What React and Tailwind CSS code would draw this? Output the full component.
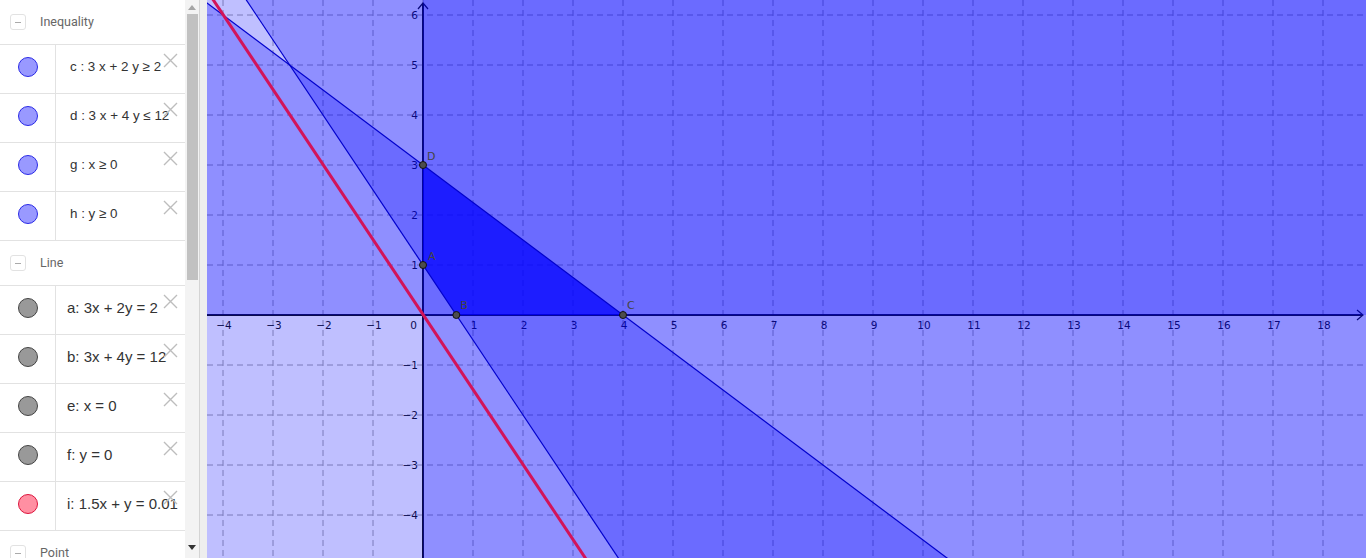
import React from "react";

const OX = 423;
const OY = 315;
const U = 50;
const sx = (x) => OX + x * U;
const sy = (y) => OY - y * U;

const xs = Array.from({ length: 23 }, (_, i) => i - 4);
const ys = Array.from({ length: 11 }, (_, i) => i - 4);
const fmt = (n) => (n < 0 ? "\u2212" + Math.abs(n) : String(n));

function XButton() {
  return (
    <svg className="absolute left-[163px] top-[8px]" width="15" height="15" viewBox="0 0 15 15">
      <path d="M1 1 L14 14 M14 1 L1 14" stroke="#bdbdbd" strokeWidth="1.4" fill="none" />
    </svg>
  );
}

function Row({ dot, big, children }) {
  return (
    <div className="relative flex h-[49px] border-t border-[#e2e2e2]">
      <div className="flex w-[56px] justify-center border-r border-[#e2e2e2] pt-[12px]">
        <div className={`h-[20px] w-[20px] rounded-full border ${dot}`} />
      </div>
      <div
        className={
          big
            ? "whitespace-nowrap pl-[11px] pt-[12px] text-[15px] leading-[20px] text-[#333]"
            : "whitespace-nowrap pl-[14px] pt-[12px] text-[13.4px] leading-[20px] text-[#333]"
        }
      >
        {children}
      </div>
      <XButton />
    </div>
  );
}

function Header({ label }) {
  return (
    <div className="flex h-[44px] items-center gap-[14px] pl-[10px]">
      <div className="flex h-[16px] w-[16px] items-center justify-center rounded-[3px] border border-[#e2e2e2]">
        <div className="h-px w-[6px] bg-[#aaa]" />
      </div>
      <span className="font-['Roboto',sans-serif] text-[12.5px] text-[#666]">{label}</span>
    </div>
  );
}

const INEQ = "bg-[#9999ff] border-[#2a2ae6]";
const LINE = "bg-[#999999] border-[#444]";
const RED = "bg-[#ff8fa2] border-[#dc143c]";

function AlgebraPanel() {
  return (
    <div className="h-full w-[185px] overflow-hidden bg-white font-['Liberation_Sans',Arial,sans-serif]">
      <Header label="Inequality" />
      <Row dot={INEQ}>c : 3 x + 2 y ≥ 2</Row>
      <Row dot={INEQ}>d : 3 x + 4 y ≤ 12</Row>
      <Row dot={INEQ}>g : x ≥ 0</Row>
      <div className="border-b border-[#e2e2e2]">
        <Row dot={INEQ}>h : y ≥ 0</Row>
      </div>
      <Header label="Line" />
      <Row dot={LINE} big>a: 3x + 2y = 2</Row>
      <Row dot={LINE} big>b: 3x + 4y = 12</Row>
      <Row dot={LINE} big>e: x = 0</Row>
      <Row dot={LINE} big>f: y = 0</Row>
      <div className="border-b border-[#e2e2e2]">
        <Row dot={RED} big>i: 1.5x + y = 0.01</Row>
      </div>
      <Header label="Point" />
    </div>
  );
}

function Scrollbar() {
  return (
    <div className="flex h-full w-[14px] flex-col bg-[#f3f3f3]">
      <div className="flex h-[14px] items-center justify-center">
        <svg width="8" height="5" viewBox="0 0 8 5">
          <path d="M0 5 L4 0 L8 5 Z" fill="#a5a5a5" />
        </svg>
      </div>
      <div className="ml-[2px] h-[266px] w-[11px] bg-[#c1c1c1]" />
      <div className="flex-1" />
      <div className="flex h-[16px] items-start justify-center pt-[3px]">
        <svg width="8" height="5" viewBox="0 0 8 5">
          <path d="M0 0 L4 5 L8 0 Z" fill="#333" />
        </svg>
      </div>
    </div>
  );
}

function Graph() {
  const pts = [
    { n: "A", x: 0, y: 1, lx: 5, ly: -5 },
    { n: "B", x: 2 / 3, y: 0, lx: 4, ly: -6 },
    { n: "C", x: 4, y: 0, lx: 4, ly: -6 },
    { n: "D", x: 0, y: 3, lx: 4, ly: -5 },
  ];
  return (
    <svg width="1159" height="558" viewBox="207 0 1159 558" className="block">
      <rect x="207" y="0" width="1159" height="558" fill="#ffffff" />
      <g stroke="#a4a4a4" strokeWidth="1" strokeDasharray="6 4">
        {xs.map((i) => (
          <line key={"gx" + i} x1={sx(i)} y1="0" x2={sx(i)} y2="558" />
        ))}
        {ys.map((j) => (
          <line key={"gy" + j} x1="207" y1={sy(j)} x2="1366" y2={sy(j)} />
        ))}
      </g>
      <g stroke="#111" strokeWidth="2" fill="none">
        <line x1="207" y1={OY} x2="1363" y2={OY} />
        <line x1={OX} y1="3" x2={OX} y2="558" />
        <path d={`M1357 ${OY - 5} L1363 ${OY} L1357 ${OY + 5}`} strokeWidth="1.2" />
        <path d={`M${OX - 5} 9 L${OX} 3 L${OX + 5} 9`} strokeWidth="1.2" />
      </g>
      <g fill="#111" fontFamily="DejaVu Sans, sans-serif" fontSize="10.5">
        {xs
          .filter((i) => i !== 0)
          .map((i) => (
            <text key={"lx" + i} x={sx(i) + 1} y={OY + 14} textAnchor="middle">
              {fmt(i)}
            </text>
          ))}
        {ys
          .filter((j) => j !== 0)
          .map((j) => (
            <text key={"ly" + j} x={OX - 5} y={sy(j) + 4} textAnchor="end">
              {fmt(j)}
            </text>
          ))}
        <text x={OX - 6} y={OY + 14} textAnchor="end">0</text>
      </g>
      <g fill="#0000ff" fillOpacity="0.25">
        <polygon points="173,-110 1423,1765 1423,-110" />
        <polygon points="173,-22.5 1423,915 173,915" />
        <rect x={OX} y="0" width={1366 - OX} height="558" />
        <rect x="207" y="0" width="1159" height={OY} />
      </g>
      <polygon
        points={`${sx(0)},${sy(1)} ${sx(2 / 3)},${sy(0)} ${sx(4)},${sy(0)} ${sx(0)},${sy(3)}`}
        fill="#0000ff"
        fillOpacity="0.63"
      />
      <g stroke="#0000cc" strokeWidth="1.2">
        <line x1="173" y1="-110" x2="1423" y2="1765" />
        <line x1="173" y1="-22.5" x2="1423" y2="915" />
      </g>
      <line x1="173" y1="-60.5" x2="673" y2="689.5" stroke="#d2145a" strokeWidth="3" />
      {pts.map((p) => (
        <g key={p.n}>
          <circle cx={sx(p.x)} cy={sy(p.y)} r="3.5" fill="#4d4d4d" stroke="#111" strokeWidth="1" />
          <text
            x={sx(p.x) + p.lx}
            y={sy(p.y) + p.ly}
            fill="#444"
            fontFamily="DejaVu Sans, sans-serif"
            fontSize="11"
          >
            {p.n}
          </text>
        </g>
      ))}
    </svg>
  );
}

export default function App() {
  return (
    <div className="flex h-[558px] w-[1366px] overflow-hidden bg-white">
      <AlgebraPanel />
      <Scrollbar />
      <div className="h-full w-[8px] border-l border-[#d4d4d4] bg-[#eeeeee]" />
      <Graph />
    </div>
  );
}
